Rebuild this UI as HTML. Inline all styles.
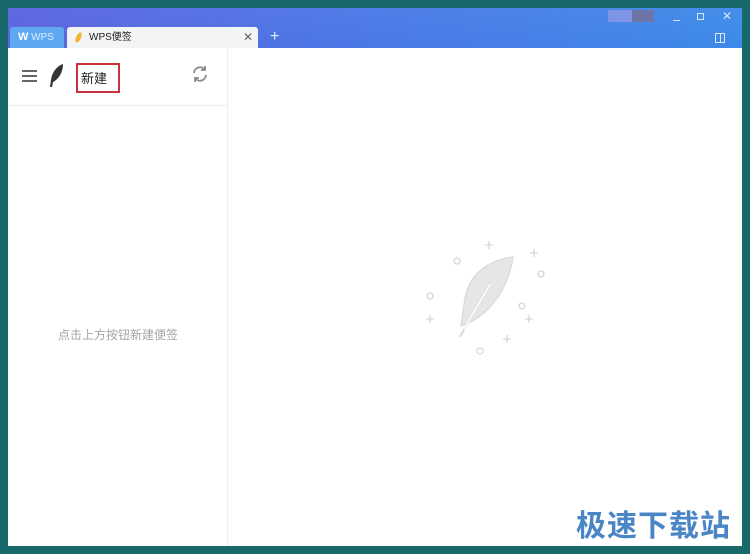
<!DOCTYPE html>
<html><head><meta charset="utf-8"><style>
*{margin:0;padding:0;box-sizing:border-box}
body{width:750px;height:554px;background:#17696a;position:relative;overflow:hidden;font-family:"Liberation Sans","Noto Sans CJK SC",sans-serif}
.win{position:absolute;left:8px;top:8px;width:734px;height:538px;background:#fff;overflow:hidden}
.title{position:absolute;left:0;top:0;width:734px;height:40px;background:linear-gradient(90deg,#5b63df,#4a78e6 50%,#3d8ae8)}
.t1{position:absolute;left:2px;top:19px;width:54px;height:21px;background:#5ea8f2;border-radius:3px 3px 0 0;color:#dcecff;font-size:10px;line-height:21px;padding-left:8px}
.t2{position:absolute;left:59px;top:19px;width:191px;height:21px;background:#f3f4f6;border-radius:3px 3px 0 0;font-size:10px;line-height:21px;padding-left:22px;color:#222}
.side{position:absolute;left:0;top:40px;width:220px;height:498px;border-right:1px solid #eceef1}
.hdr{position:absolute;left:0;top:0;width:220px;height:58px;border-bottom:1px solid #eceef1}
</style></head><body>
<div class="win">
<div class="title">
<div style="position:absolute;left:0;top:0;width:734px;height:40px;background:linear-gradient(180deg,rgba(255,255,255,0.04),rgba(255,255,255,0))"></div>
<div style="position:absolute;left:600px;top:2px;width:24px;height:12px;background:#7e94e4"></div>
<div style="position:absolute;left:624px;top:2px;width:22px;height:12px;background:#6c74a8"></div>
<div style="position:absolute;left:665px;top:12px;width:7px;height:1px;background:#d8e4fc"></div>
<div style="position:absolute;left:689px;top:5px;width:7px;height:7px;border:1px solid #d8e4fc"></div>
<div style="position:absolute;left:714px;top:1px;color:#d8e4fc;font-size:12px">✕</div>
<div style="position:absolute;left:707px;top:25px;width:10px;height:10px;border:1px solid #dce6fc"></div>
<div style="position:absolute;left:712px;top:25px;width:1px;height:10px;background:#dce6fc"></div>
<div class="t1"><b style="color:#fff;font-size:11px">W</b> WPS</div>
<div class="t2"><span style="position:absolute;left:9px;top:5px;width:5px;height:11px;background:#f2b630;border-radius:50%;transform:rotate(25deg)"></span>WPS便签<span style="position:absolute;left:176px;top:0;color:#666;font-size:12px">✕</span></div>
<div style="position:absolute;left:262px;top:19px;color:#e4eeff;font-size:16px;line-height:20px">+</div>
</div>
<div class="side">
<div class="hdr">
<div style="position:absolute;left:14px;top:22px;width:15px;height:2px;background:#666;box-shadow:0 5px 0 #666,0 10px 0 #666"></div>
<svg style="position:absolute;left:40px;top:15px" width="18" height="26" viewBox="0 0 18 26"><path d="M15 1C9 3 4 9 3 17L2 24L4 24L5 19C11 16 15 9 15 1Z" fill="#333"/></svg>
<div style="position:absolute;left:68px;top:15px;width:44px;height:30px;border:2px solid #c8323a"></div>
<div style="position:absolute;left:73px;top:20px;font-size:13px;color:#222">新建</div>
<svg style="position:absolute;left:183px;top:17px" width="18" height="18" viewBox="0 0 18 18" fill="none" stroke="#888" stroke-width="1.8"><path d="M3 8A6 6 0 0 1 14 5M15 10A6 6 0 0 1 4 13"/><path d="M14 1V5H10M4 17V13H8"/></svg>
</div>
<div style="position:absolute;left:0;width:220px;top:278px;text-align:center;font-size:12px;color:#a6a6a6">点击上方按钮新建便签</div>
</div>
<svg style="position:absolute;left:402px;top:222px" width="150" height="130" viewBox="0 0 150 130" fill="none" stroke="#d6d6d6" stroke-width="1.3">
<path d="M103 27C80 30 60 42 55 68L51 96C76 88 98 62 103 27Z" fill="#e6e6e6" stroke="#dadada"/>
<path d="M80 52L50 107" stroke="#dadada" stroke-width="2"/>
<path d="M80 54L54 99" stroke="#fff" stroke-width="1.5"/>
<path d="M79 11v8M75 15h8M20 85v8M16 89h8M119 85v8M115 89h8M124 19v8M120 23h8M97 105v8M93 109h8"/>
<circle cx="47" cy="31" r="3"/><circle cx="131" cy="44" r="3"/><circle cx="20" cy="66" r="3"/><circle cx="70" cy="121" r="3"/><circle cx="112" cy="76" r="3"/>
</svg>
</div>
<div style="position:absolute;left:576px;top:505px;font-size:30px;font-weight:bold;color:#4a86c6;letter-spacing:1px;font-family:'Noto Sans CJK SC',sans-serif;line-height:36px">极速下载站</div>
</body></html>
